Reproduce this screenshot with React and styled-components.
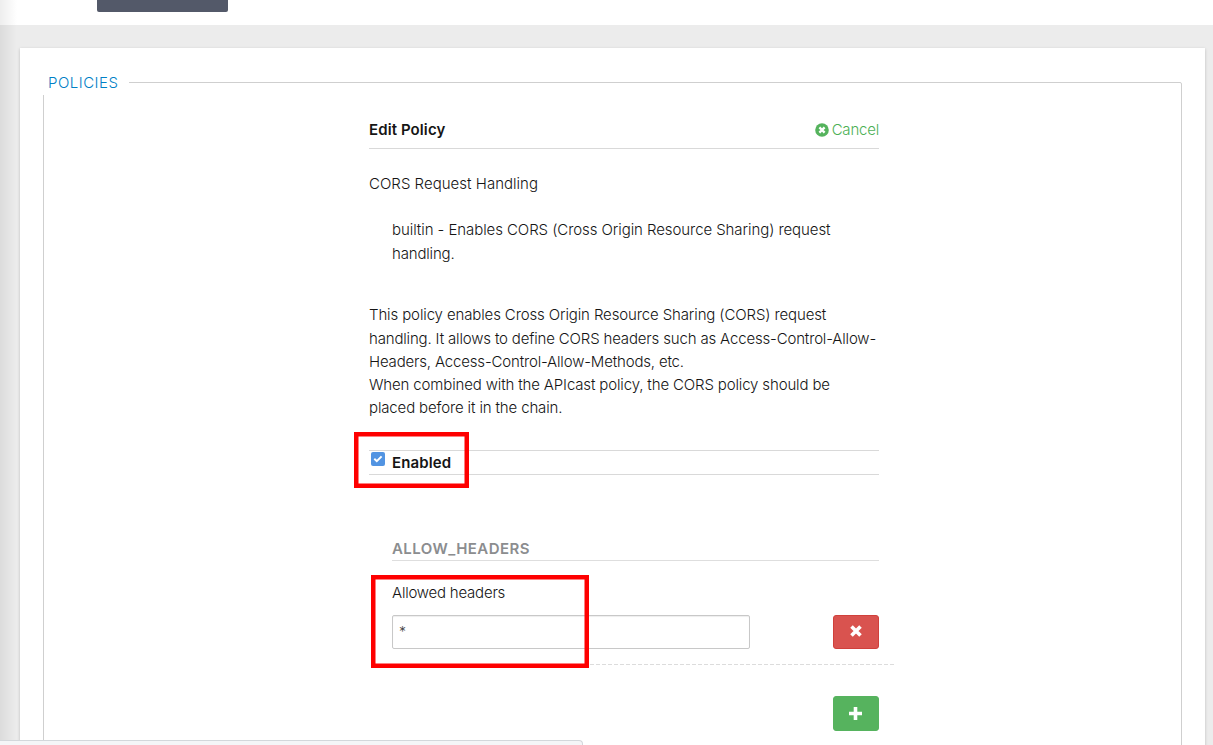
import React from "react";
import styled, { createGlobalStyle } from "styled-components";

const GlobalStyle = createGlobalStyle`
  * { box-sizing: border-box; }
  html, body { margin: 0; padding: 0; overflow: hidden; }
  body {
    font-family: Inter, "Liberation Sans", sans-serif;
    font-size: 15px;
    font-weight: 360;
    color: #151515;
    background: #ececec;
  }
`;

const Page = styled.div`
  position: relative;
  height: 745px;
  overflow: hidden;
  display: flex;
  flex-direction: column;
`;

const TopBar = styled.div`
  flex: none;
  height: 25px;
  padding-left: 97px;
  background: #fff;
`;

const TopButton = styled.div`
  width: 131px;
  height: 12px;
  border-radius: 0 0 2px 2px;
  background: #535969;
`;

const SideShadow = styled.div`
  position: absolute;
  left: 0;
  top: 0;
  width: 17px;
  height: 745px;
  background: linear-gradient(to right, rgba(0, 0, 0, 0.07), rgba(0, 0, 0, 0.045) 40%, rgba(0, 0, 0, 0));
`;

const Card = styled.main`
  flex: 1;
  margin: 23px 8px 0 20px;
  padding: 22px 23px 0;
  background: #fff;
  box-shadow: 0 1px 3px rgba(0, 0, 0, 0.2);
`;

const Fieldset = styled.fieldset`
  height: 800px;
  margin: 0;
  padding: 0;
  border: 1px solid #cfcfcf;
  border-radius: 0 2px 0 0;
`;

const Legend = styled.legend`
  height: 25px;
  margin-left: -1px;
  padding: 0 11px 0 5px;
  background: #fff;
  color: #0080c6;
  line-height: 25px;
  letter-spacing: ${(p) => p.$track}px;
`;

const Column = styled.div`
  width: 510px;
  margin-left: 325px;
`;

const Header = styled.header`
  display: flex;
  justify-content: space-between;
  height: 54px;
  padding-top: 23px;
  line-height: 24px;
  border-bottom: 1px solid #d9d9d9;
`;

const Text = styled.span`
  display: block;
  white-space: nowrap;
  font-weight: ${(p) => p.$weight || "inherit"};
  letter-spacing: ${(p) => p.$track || 0}px;
`;

const Cancel = styled.a`
  display: flex;
  align-items: center;
  gap: 3px;
  height: 24px;
  color: #4bb054;
`;

const PolicyName = styled.div`
  margin-top: 23px;
  line-height: 24px;
`;

const Summary = styled.div`
  margin: 22px 0 0 23px;
  line-height: 24px;
`;

const Description = styled.div`
  margin-top: 37.4px;
  line-height: 23.2px;
`;

const EnabledRow = styled.label`
  display: flex;
  height: 25px;
  margin-top: 30.6px;
  padding-left: 2px;
  gap: 7px;
  line-height: 24px;
  border-top: 1px solid #d9d9d9;
  border-bottom: 1px solid #d9d9d9;
`;

const Checkbox = styled.span`
  display: flex;
  align-items: center;
  justify-content: center;
  width: 14px;
  height: 14px;
  margin-top: 1px;
  border-radius: 2px;
  background: #5294e2;
`;

const Section = styled.section`
  margin: 62px 0 0 23px;
`;

const SectionTitle = styled.div`
  height: 24px;
  line-height: 24px;
  color: #8b8d8f;
  border-bottom: 1px solid #dedede;
`;

const FieldLabel = styled.div`
  margin-top: 20px;
  line-height: 24px;
`;

const InputRow = styled.div`
  display: flex;
  justify-content: space-between;
  align-items: flex-start;
  margin: 10px -15px 0 0;
  padding: 0 15px 15px 0;
`;

const Divider = styled.div`
  height: 1px;
  margin: 0 -15px 0 0;
  background: repeating-linear-gradient(to right, #dcdcdc 0 4px, transparent 4px 6px);
`;

const Input = styled.div`
  width: 358px;
  height: 34px;
  padding-left: 6px;
  border: 1px solid #c8c8c8;
  border-radius: 2px;
  font-size: 14px;
  line-height: 32px;
  color: #444;
  box-shadow: inset 0 1px 1px rgba(0, 0, 0, 0.07);
`;

const Button = styled.button`
  display: flex;
  align-items: center;
  justify-content: center;
  width: 46px;
  height: ${(p) => p.$height}px;
  padding: 0 1px ${(p) => p.$lift}px 0;
  border: 1px solid ${(p) => p.$edge};
  border-radius: 3px;
  background: ${(p) => p.$fill};
`;

const AddRow = styled.div`
  display: flex;
  justify-content: flex-end;
  margin-top: 31px;
`;

const Highlight = styled.div`
  position: absolute;
  left: ${(p) => p.$x}px;
  top: ${(p) => p.$y}px;
  width: ${(p) => p.$w}px;
  height: ${(p) => p.$h}px;
  box-shadow: inset 0 0 0 4.5px #fe0000;
`;

const StatusBar = styled.div`
  position: absolute;
  left: 0;
  bottom: 0;
  width: 583px;
  height: 5px;
  border: solid #d3d7db;
  border-width: 1px 1px 0 0;
  border-radius: 0 4px 0 0;
  background: #f4f5f7;
`;

const summary = [
  ["builtin - Enables CORS (Cross Origin Resource Sharing) request", -0.075],
  ["handling.", -0.17],
];

const description = [
  ["This policy enables Cross Origin Resource Sharing (CORS) request", -0.125],
  ["handling. It allows to define CORS headers such as Access-Control-Allow-", -0.165],
  ["Headers, Access-Control-Allow-Methods, etc.", -0.17],
  ["When combined with the APIcast policy, the CORS policy should be", -0.145],
  ["placed before it in the chain.", -0.14],
];

export default function App() {
  return (
    <Page>
      <GlobalStyle />
      <TopBar>
        <TopButton />
      </TopBar>
      <Card>
        <Fieldset>
          <Legend $track={0.5}>POLICIES</Legend>
          <Column>
            <Header>
              <Text $weight={600} $track={0.1}>Edit Policy</Text>
              <Cancel>
                <svg width="14" height="14" viewBox="0 0 14 14">
                  <circle cx="7" cy="7" r="6.8" fill="#55b35d" />
                  <path d="M4.4 4.4l5.2 5.2M9.6 4.4L4.4 9.6" stroke="#fff" strokeWidth="2.3" />
                </svg>
                <Text $track={-0.2}>Cancel</Text>
              </Cancel>
            </Header>
            <PolicyName>
              <Text $track={0.02}>CORS Request Handling</Text>
            </PolicyName>
            <Summary>
              {summary.map(([t, s]) => (
                <Text key={t} $track={s}>{t}</Text>
              ))}
            </Summary>
            <Description>
              {description.map(([t, s]) => (
                <Text key={t} $track={s}>{t}</Text>
              ))}
            </Description>
            <EnabledRow>
              <Checkbox>
                <svg width="10" height="8" viewBox="0 0 10 8">
                  <path d="M1.3 3.8l2.5 2.4 4.8-4.8" fill="none" stroke="#fff" strokeWidth="2" />
                </svg>
              </Checkbox>
              <Text $weight={600} $track={0.13}>Enabled</Text>
            </EnabledRow>
            <Section>
              <SectionTitle>
                <Text $weight={600} $track={0.44}>ALLOW_HEADERS</Text>
              </SectionTitle>
              <FieldLabel>
                <Text $track={-0.22}>Allowed headers</Text>
              </FieldLabel>
              <InputRow>
                <Input>*</Input>
                <Button $height={34} $lift={2} $fill="#d9534f" $edge="#d0403b">
                  <svg width="12" height="12" viewBox="0 0 12 12">
                    <path d="M1.5 1.5l9 9M10.5 1.5l-9 9" stroke="#fff" strokeWidth="3.6" />
                  </svg>
                </Button>
              </InputRow>
              <Divider />
              <AddRow>
                <Button $height={35} $lift={1} $fill="#56b35e" $edge="#56b35e">
                  <svg width="13" height="13" viewBox="0 0 13 13">
                    <path d="M0 6.5h13M6.5 0v13" stroke="#fff" strokeWidth="3.6" />
                  </svg>
                </Button>
              </AddRow>
            </Section>
          </Column>
        </Fieldset>
      </Card>
      <SideShadow />
      <Highlight $x={354} $y={432} $w={115} $h={56} />
      <Highlight $x={371} $y={575} $w={218} $h={93} />
      <StatusBar />
    </Page>
  );
}
